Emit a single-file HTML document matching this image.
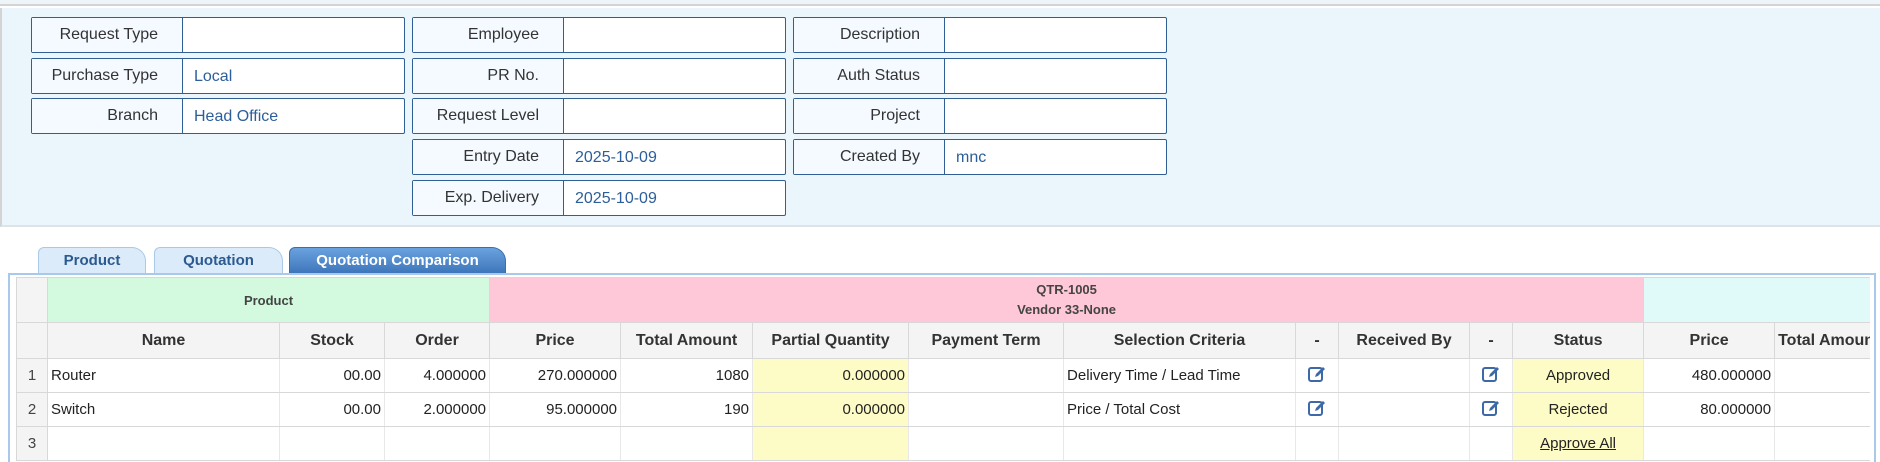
<!DOCTYPE html>
<html><head><meta charset="utf-8"><style>
*{box-sizing:border-box;margin:0;padding:0}
body{width:1880px;height:462px;background:#fff;font-family:"Liberation Sans",sans-serif;position:relative;overflow:hidden}
.top{position:absolute;left:0;top:0;width:1880px;height:6px;background:#eef5f8;border-bottom:2px solid #d4d4d4}
.panel{position:absolute;left:0;top:8px;width:1880px;height:219px;background:#eaf6fc;border-left:2px solid #d4d4d4;border-bottom:2px solid #dde3e6}
.f{position:absolute;height:36px;border:1px solid #2f5f94;border-radius:2px;display:flex;background:#fff}
.f .l{width:151px;background:#f4faff;border-right:1px solid #2f5f94;text-align:right;padding-right:24px;line-height:34px;font-size:16px;color:#333}
.f .v{flex:1;line-height:36px;padding-left:11px;font-size:16px;color:#2b5e9a}
.tab{position:absolute;top:247px;height:26px;border:1px solid #a9c9e8;border-bottom:none;border-radius:6px 14px 0 0;background:#dcebf9;color:#2b5a91;font-weight:bold;font-size:15px;line-height:25px;text-align:center}
.tab.a{background:linear-gradient(#6aa2df,#3e76bb);color:#fff;border-color:#3a6eae}
.frame{position:absolute;left:8px;top:273px;width:1868px;height:189px;border:2px solid #a9c9ec;border-bottom:none}
.clip{position:absolute;left:16px;top:277px;width:1854px;height:185px;overflow:hidden}
table{position:absolute;left:0;top:0;width:1878px;border-collapse:collapse;table-layout:fixed;font-size:15px;color:#222}
td{border:1px solid #e8e8e8;height:34px;padding:0 3px;white-space:nowrap;overflow:hidden}
tr.h td{background:#f4f4f4;border-color:#d8d8d8;font-weight:bold;font-size:16px;text-align:center;color:#333;height:36px}
tr.g td{height:45px;font-weight:bold;font-size:13px;color:#444;text-align:center;border-color:#d8d8d8}
td.n{background:#f4f4f4;text-align:center;color:#444;border-color:#d8d8d8}
.r{text-align:right}.y{background:#fefcc6}.c{text-align:center}
tr.d td{border-bottom-color:#d8d8d8}
</style></head><body>
<div class="top"></div>
<div class="panel"></div>
<div class="f" style="left:31px;top:17px;width:374px"><div class="l">Request Type</div><div class="v"></div></div>
<div class="f" style="left:31px;top:58px;width:374px"><div class="l">Purchase Type</div><div class="v">Local</div></div>
<div class="f" style="left:31px;top:98px;width:374px"><div class="l">Branch</div><div class="v">Head Office</div></div>
<div class="f" style="left:412px;top:17px;width:374px"><div class="l">Employee</div><div class="v"></div></div>
<div class="f" style="left:412px;top:58px;width:374px"><div class="l">PR No.</div><div class="v"></div></div>
<div class="f" style="left:412px;top:98px;width:374px"><div class="l">Request Level</div><div class="v"></div></div>
<div class="f" style="left:412px;top:139px;width:374px"><div class="l">Entry Date</div><div class="v">2025-10-09</div></div>
<div class="f" style="left:412px;top:180px;width:374px"><div class="l">Exp. Delivery</div><div class="v">2025-10-09</div></div>
<div class="f" style="left:793px;top:17px;width:374px"><div class="l">Description</div><div class="v"></div></div>
<div class="f" style="left:793px;top:58px;width:374px"><div class="l">Auth Status</div><div class="v"></div></div>
<div class="f" style="left:793px;top:98px;width:374px"><div class="l">Project</div><div class="v"></div></div>
<div class="f" style="left:793px;top:139px;width:374px"><div class="l">Created By</div><div class="v">mnc</div></div>
<div class="tab" style="left:38px;width:108px">Product</div>
<div class="tab" style="left:154px;width:129px">Quotation</div>
<div class="tab a" style="left:289px;width:217px">Quotation Comparison</div>
<div class="frame"></div>
<div class="clip">
<table>
<colgroup><col style="width:31px"><col style="width:232px"><col style="width:105px"><col style="width:105px"><col style="width:131px"><col style="width:132px"><col style="width:156px"><col style="width:155px"><col style="width:232px"><col style="width:43px"><col style="width:131px"><col style="width:43px"><col style="width:131px"><col style="width:131px"><col style="width:120px"></colgroup>
<tr class="g"><td class="n"></td><td colspan="3" style="background:#d3f9df">Product</td><td colspan="9" style="background:#fec8d8;line-height:20px">QTR-1005<br>Vendor 33-None</td><td colspan="2" style="background:#e0fafa"></td></tr>
<tr class="h"><td></td><td>Name</td><td>Stock</td><td>Order</td><td>Price</td><td>Total Amount</td><td>Partial Quantity</td><td>Payment Term</td><td>Selection Criteria</td><td>-</td><td>Received By</td><td>-</td><td>Status</td><td>Price</td><td style="text-align:left">Total Amount</td></tr>
<tr class="d"><td class="n">1</td><td>Router</td><td class="r">00.00</td><td class="r">4.000000</td><td class="r">270.000000</td><td class="r">1080</td><td class="r y">0.000000</td><td></td><td>Delivery Time / Lead Time</td><td class="c"><svg width="20" height="20" viewBox="0 0 20 20"><rect x="2" y="4" width="13" height="13" rx="2" fill="none" stroke="#3d6aa6" stroke-width="2"/><path d="M8 13l1-3 7-7 2 2-7 7z" fill="#3d6aa6"/></svg></td><td></td><td class="c"><svg width="20" height="20" viewBox="0 0 20 20"><rect x="2" y="4" width="13" height="13" rx="2" fill="none" stroke="#3d6aa6" stroke-width="2"/><path d="M8 13l1-3 7-7 2 2-7 7z" fill="#3d6aa6"/></svg></td><td class="c y">Approved</td><td class="r">480.000000</td><td></td></tr>
<tr class="d"><td class="n">2</td><td>Switch</td><td class="r">00.00</td><td class="r">2.000000</td><td class="r">95.000000</td><td class="r">190</td><td class="r y">0.000000</td><td></td><td>Price / Total Cost</td><td class="c"><svg width="20" height="20" viewBox="0 0 20 20"><rect x="2" y="4" width="13" height="13" rx="2" fill="none" stroke="#3d6aa6" stroke-width="2"/><path d="M8 13l1-3 7-7 2 2-7 7z" fill="#3d6aa6"/></svg></td><td></td><td class="c"><svg width="20" height="20" viewBox="0 0 20 20"><rect x="2" y="4" width="13" height="13" rx="2" fill="none" stroke="#3d6aa6" stroke-width="2"/><path d="M8 13l1-3 7-7 2 2-7 7z" fill="#3d6aa6"/></svg></td><td class="c y">Rejected</td><td class="r">80.000000</td><td></td></tr>
<tr class="d"><td class="n">3</td><td></td><td></td><td></td><td></td><td></td><td class="y"></td><td></td><td></td><td></td><td></td><td></td><td class="c y"><u>Approve All</u></td><td></td><td></td></tr>
</table>
</div>
</body></html>
